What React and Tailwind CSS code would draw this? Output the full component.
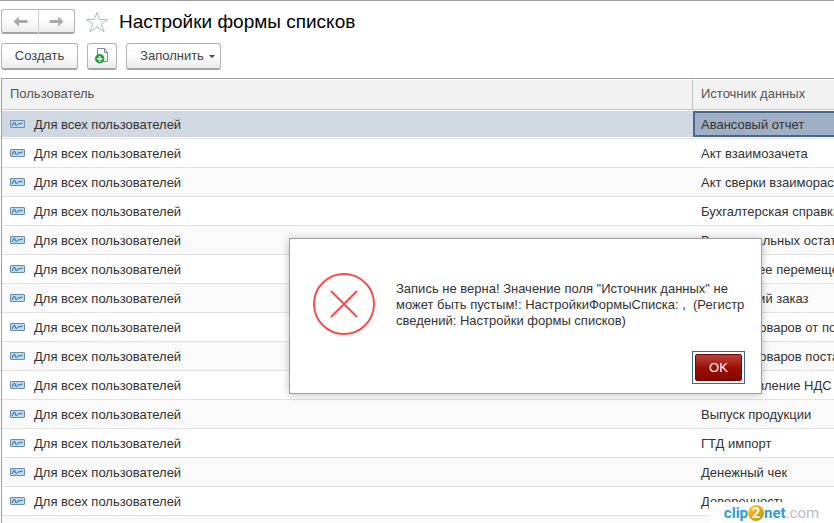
import { useState } from 'react';

const ROWS = [
  'Авансовый отчет',
  'Акт взаимозачета',
  'Акт сверки взаиморасчетов',
  'Бухгалтерская справка',
  'Ввод начальных остатков',
  'Внутреннее перемещение',
  'Внутренний заказ',
  'Возврат товаров от покупателя',
  'Возврат товаров поставщику',
  'Восстановление НДС',
  'Выпуск продукции',
  'ГТД импорт',
  'Денежный чек',
  'Доверенность',
  '',
];

const BUTTON =
  'flex items-center justify-center rounded-[3px] border border-[#b4b4b4] border-b-2 border-b-[#a5a5a5] bg-linear-to-b from-white from-40% to-[#ececec] text-[#444]';

// --- Icons ---

function Arrow({ back }) {
  return (
    <svg width="15" height="11" viewBox="0 0 15 11" className={back ? 'shrink-0' : 'shrink-0 rotate-180'}>
      <path d="M0.5 5.5 L5.8 0.5 V4 H14.5 V7 H5.8 V10.5 Z" fill="#a9a9a9" />
    </svg>
  );
}

function Star() {
  return (
    <svg width="24" height="22" viewBox="0 0 24 22" fill="#fff" stroke="#b3b9c1" strokeWidth="1">
      <path d="M12 1.3 L14.6 8.4 L22.8 8.5 L16.2 13.2 L19.2 20.9 L12 16.2 L4.8 20.9 L7.8 13.2 L1.2 8.5 L9.4 8.4 Z" />
    </svg>
  );
}

function AddPage() {
  return (
    <svg width="14" height="16" viewBox="0 0 14 16" className="shrink-0">
      <path d="M2.5 7 V0.5 H9.5 L12.5 4.5 V13.5 H8" fill="#fff" stroke="#7d8b9c" />
      <path d="M9.5 0.5 V4.5 H12.5" fill="none" stroke="#7d8b9c" />
      <circle cx="4.7" cy="10.7" r="4.4" fill="#23a03a" stroke="#178a2c" strokeWidth="0.6" />
      <path d="M4.7 8 V13.4 M2 10.7 H7.4" stroke="#fff" strokeWidth="1.5" />
    </svg>
  );
}

function RecordIcon() {
  return (
    <svg width="15" height="8" viewBox="0 0 15 8" className="shrink-0">
      <rect x="0.5" y="0.5" width="14" height="7" rx="0.5" fill="#b9dbf3" stroke="#6f8ba6" />
      <path d="M2.3 5.8 C3.3 2.5 4.3 1.5 5 2.8 C5.6 4 5.2 5.8 6.5 5.4 C7.6 5 8 3.6 9 3.8 C9.8 4.3 10.5 3 12.5 3.2" fill="none" stroke="#17548c" />
    </svg>
  );
}

function ErrorIcon() {
  return (
    <svg width="62" height="62" viewBox="0 0 62 62" fill="none" stroke="#fb4b4b" strokeWidth="2" className="shrink-0">
      <circle cx="31" cy="31" r="30" />
      <path d="M18.5 18.5 L43.5 43.5 M43.5 18.5 L18.5 43.5" strokeLinecap="round" />
    </svg>
  );
}

// --- Page parts ---

function Toolbar() {
  return (
    <header className="px-px">
      <div className="flex items-center pt-2">
        <div className="flex">
          <button type="button" aria-label="Назад" className={`${BUTTON} h-[25px] w-[37px] rounded-r-none border-r-0`}>
            <Arrow back />
          </button>
          <button type="button" aria-label="Вперед" className={`${BUTTON} h-[25px] w-[37px] rounded-l-none border-l-[#cfcfcf]`}>
            <Arrow />
          </button>
        </div>
        <button type="button" aria-label="В избранное" className="ml-[10px]">
          <Star />
        </button>
        <h1 className="ml-[10px] text-[19px] leading-6 text-black">Настройки формы списков</h1>
      </div>
      <div className="mt-[9px] flex gap-[9px]">
        <button type="button" className={`${BUTTON} h-[27px] w-[77px]`}>Создать</button>
        <button type="button" aria-label="Добавить" className={`${BUTTON} h-[27px] w-[30px]`}>
          <AddPage />
        </button>
        <button type="button" className={`${BUTTON} h-[27px] w-[95px] gap-[5px] pl-2`}>
          Заполнить
          <svg width="6" height="3" viewBox="0 0 6 3">
            <path d="M0 0 H6 L3 3 Z" fill="#444" />
          </svg>
        </button>
      </div>
    </header>
  );
}

function SettingsTable({ selected, onSelect }) {
  return (
    <div className="mt-2 ml-px border-t border-l border-[#a0a0a0]">
      <table className="w-full table-fixed border-separate border-spacing-0">
        <colgroup>
          <col />
          <col className="w-[141px]" />
        </colgroup>
        <thead>
          <tr className="h-[31px] text-left text-[#555]">
            <th className="border-t border-r border-b border-t-white border-r-[#c4c4c4] border-b-[#c8c8c8] bg-[#f2f2f2] px-2 pb-0.5 font-normal">
              Пользователь
            </th>
            <th className="border-t border-b border-t-white border-b-[#c8c8c8] bg-[#f2f2f2] px-2 pb-0.5 font-normal">
              Источник данных
            </th>
          </tr>
        </thead>
        <tbody>
          {ROWS.map((name, i) => {
            const active = i === selected;
            const bg = i % 2 === 0 ? 'bg-[#fafafa]' : 'bg-white';
            return (
              <tr key={i} onClick={() => onSelect(i)} className={`h-[29px] ${active ? 'bg-white' : bg}`}>
                <td className="border-b border-[#e2e2e2] py-px">
                  <div className={`flex h-[26px] items-center gap-[9px] px-2 ${active ? 'bg-[#d0d8e2]' : ''}`}>
                    <RecordIcon />
                    <span className="pt-0.5">Для всех пользователей</span>
                  </div>
                </td>
                <td className="border-b border-[#e2e2e2] py-px">
                  <div
                    className={`flex h-[26px] items-center border-2 border-r-0 pl-1.5 whitespace-nowrap ${
                      active ? 'border-[#46648e] bg-[#a0b0c4]' : 'border-transparent'
                    }`}
                  >
                    <span className="pt-0.5">{name}</span>
                  </div>
                </td>
              </tr>
            );
          })}
        </tbody>
      </table>
    </div>
  );
}

function ErrorDialog({ onClose }) {
  return (
    <div
      role="alertdialog"
      aria-label="Ошибка"
      className="absolute top-[237px] left-[289px] w-[473px] border border-[#a0a0a0] bg-white pt-[34px] pr-4 pb-[9px] pl-[23px] shadow-[0_1px_8px_rgba(0,0,0,0.25)]"
    >
      <div className="flex gap-[21px]">
        <ErrorIcon />
        <p className="pt-2 leading-4 whitespace-pre">
          {'Запись не верна! Значение поля "Источник данных" не\nможет быть пустым!: НастройкиФормыСписка: ,\u00a0 (Регистр\nсведений: Настройки формы списков)'}
        </p>
      </div>
      <div className="mt-4 flex justify-end">
        <div className="border border-[#46648e] p-0.5">
          <button
            type="button"
            onClick={onClose}
            className="block h-[27px] w-[47px] rounded-[2px] border border-[#6b0a05] bg-linear-to-b from-[#b8403a] via-[#9c0c00] to-[#860900] text-[13px] text-white"
          >
            OK
          </button>
        </div>
      </div>
    </div>
  );
}

function Watermark() {
  return (
    <div className="absolute right-0 bottom-0 flex h-[21px] w-[125px] items-center justify-center bg-white font-[Roboto,sans-serif] text-[15px] leading-5">
      <span className="font-bold text-[#2f9be0]">clip</span>
      <span className="flex size-4 items-center justify-center rounded-full bg-linear-to-br from-[#fde000] via-[#f59a12] to-[#5cb82c] font-bold text-white">
        2
      </span>
      <span className="font-bold text-[#2f9be0]">net</span>
      <span className="text-[#b9bcc4]">.com</span>
    </div>
  );
}

export default function App() {
  const [selected, setSelected] = useState(0);
  const [open, setOpen] = useState(true);

  return (
    <div className="relative h-screen overflow-hidden border-t border-[#a0a0a0] bg-white font-['Liberation_Sans',Arial,sans-serif] text-[13px] text-[#333]">
      <Toolbar />
      <SettingsTable selected={selected} onSelect={setSelected} />
      {open && <ErrorDialog onClose={() => setOpen(false)} />}
      <Watermark />
    </div>
  );
}
